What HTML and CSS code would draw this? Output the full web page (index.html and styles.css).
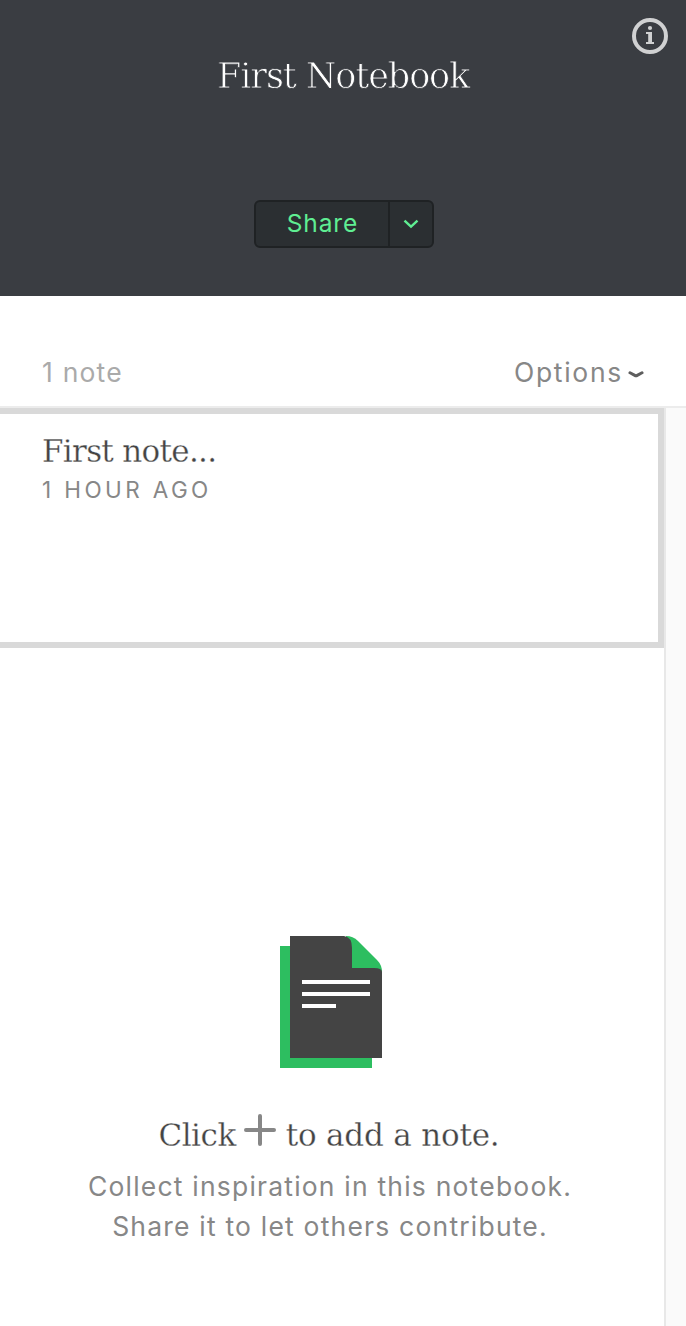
FILE: index.html
```html
<!DOCTYPE html>
<html lang="en">
<head>
<meta charset="utf-8">
<title>First Notebook</title>
<link rel="stylesheet" href="styles.css">
</head>
<body>
<div class="app">
  <header class="header">
    <svg class="info" width="36" height="36" viewBox="0 0 36 36">
      <circle cx="18" cy="18" r="16" fill="none" stroke="#d0d1d2" stroke-width="4"/>
      <circle cx="18" cy="10" r="2.1" fill="#d0d1d2"/>
      <path d="M14 14H20V24H22V26H14V24H16.2V16H14z" fill="#d0d1d2"/>
    </svg>
    <h1 class="title">First Notebook</h1>
    <div class="share">
      <button class="share-main"><span class="share-label">Share</span></button>
      <button class="share-more"><svg width="16" height="10" viewBox="0 0 16 10"><path d="M1.5 1.7L8 7.6L14.5 1.7" fill="none" stroke="#5fee92" stroke-width="2.4"/></svg></button>
    </div>
  </header>
  <div class="toolbar">
    <span class="count">1 note</span>
    <span class="options"><span class="options-label">Options</span><svg class="options-arrow" width="16" height="10" viewBox="0 0 16 10"><path d="M2 2.8L6.8 5.4Q8 6.1 9.2 5.4L14 2.8" fill="none" stroke="#5e5e5e" stroke-width="3" stroke-linecap="round" stroke-linejoin="round"/></svg></span>
  </div>
  <div class="content">
    <main class="list">
      <article class="note">
        <h2 class="note-title">First note...</h2>
        <div class="note-time">1 HOUR AGO</div>
      </article>
      <section class="empty">
        <svg class="doc" width="102" height="132" viewBox="0 0 102 132">
          <path d="M0 10H20V112H92V132H0z" fill="#2dbe60"/>
          <path d="M66 0Q73 0 78 5L97 24Q102 29 102 36H66z" fill="#2dbe60"/>
          <path d="M10 0H64Q72 1 72 12V32H94Q102 32 102 36V122H10z" fill="#444"/>
          <path d="M22 44H90V48H22zM22 56H90V60H22zM22 68H56V72H22z" fill="#fff"/>
        </svg>
        <div class="prompt"><span class="click">Click</span><svg class="plus" width="32" height="32" viewBox="0 0 32 32"><path d="M16 2V30M2 16H30" stroke="#878787" stroke-width="4" stroke-linecap="round"/></svg><span class="add">to add a note.</span></div>
        <p class="hint"><span class="hint-one">Collect inspiration in this notebook.</span><br><span class="hint-two">Share it to let others contribute.</span></p>
      </section>
    </main>
    <aside class="gutter"></aside>
  </div>
</div>
</body>
</html>
```
FILE: styles.css
```css
* { box-sizing: border-box; }
body { margin: 0; background: #fff; font-family: Inter, "Liberation Sans", sans-serif; }
.app { display: flex; flex-direction: column; width: 686px; height: 1326px; overflow: hidden; }
.header { position: relative; height: 296px; background: #3a3d42; display: flex; flex-direction: column; align-items: center; padding: 51px 0 0 2px; }
.info { position: absolute; top: 18px; right: 18px; }
.title, .note-title, .prompt { margin: 0; font-family: "DejaVu Serif", serif; font-weight: 400; white-space: nowrap; }
.title { margin-right: 2px; font-size: 35px; line-height: 50px; letter-spacing: -1.1px; color: #fff; -webkit-text-stroke: 0.8px #3a3d42; will-change: transform; }
.share { display: flex; width: 180px; height: 48px; margin-top: 99px; border: 2px solid #1f2224; border-radius: 6px; background: #2b2f32; }
.share button { display: flex; align-items: center; justify-content: center; padding: 0; border: 0; background: none; font: inherit; }
.share .share-main { width: 134px; border-right: 2px solid #1f2224; padding: 0 0 3px 1px; }
.share .share-more { flex: 1; }
.share-label { font-size: 24.5px; color: #5fee92; letter-spacing: 0.9px; }
.toolbar { height: 112px; padding: 56px 42px 0; border-bottom: 2px solid #ececec; display: flex; justify-content: space-between; font-size: 26.5px; line-height: 40px; }
.count { color: #aaa; letter-spacing: 1.2px; }
.options { display: flex; align-items: center; gap: 5px; height: 40px; color: #878787; letter-spacing: 1.7px; }
.options-arrow { margin-top: 5px; }
.content { display: flex; flex: 1; }
.list { width: 664px; }
.gutter { flex: 1; border-left: 2px solid #e8e8e8; background: #fafafa; }
.note { height: 240px; border: 6px solid #d9d9d9; border-left: 0; padding: 17px 42px 0; }
.note-title { font-size: 31px; line-height: 40px; letter-spacing: -0.7px; color: #444; -webkit-text-stroke: 0.3px #fff; }
.note-time { font-size: 22.5px; line-height: 38px; color: #878787; letter-spacing: 3.4px; }
.empty { display: flex; flex-direction: column; align-items: center; padding: 288px 4px 0 0; }
.doc { display: block; margin-left: 2px; }
.prompt { display: flex; align-items: center; height: 40px; margin: 47px 2px 0 0; font-size: 31px; line-height: 40px; color: #444; -webkit-text-stroke: 0.3px #fff; }
.click { letter-spacing: -0.5px; }
.add { letter-spacing: -0.2px; }
.plus { margin: 0 10px 10px 8px; }
.hint { margin: 11px 0 0; font-size: 26.5px; line-height: 40px; letter-spacing: 1.2px; color: #878787; text-align: center; white-space: nowrap; }
```
